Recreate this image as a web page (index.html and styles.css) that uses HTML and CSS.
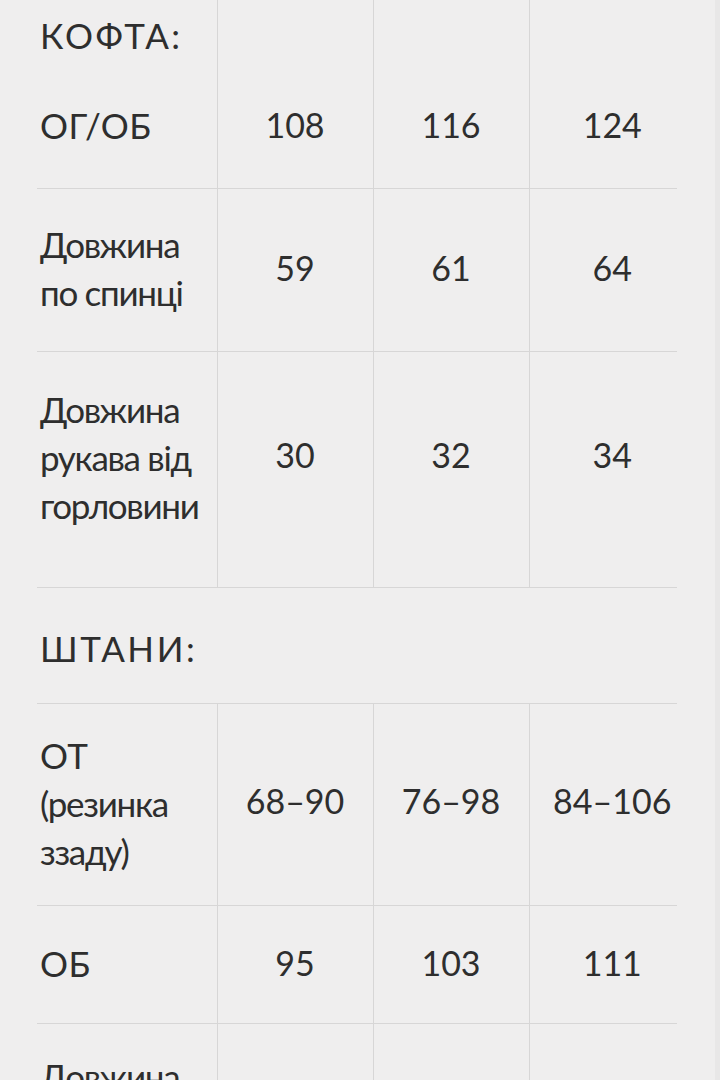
FILE: index.html
```html
<!DOCTYPE html>
<html lang="uk">
<head>
<meta charset="utf-8">
<link rel="stylesheet" href="styles.css">
</head>
<body>
<div class="page">
  <table class="sizes">
    <colgroup>
      <col class="c-label">
      <col class="c-val">
      <col class="c-val">
      <col class="c-last">
    </colgroup>
    <tr class="r-head">
      <td class="label caps wide">КОФТА:</td>
      <td class="val"></td>
      <td class="val"></td>
      <td class="val last"></td>
    </tr>
    <tr class="r1 line">
      <td class="label caps">ОГ/ОБ</td>
      <td class="val">108</td>
      <td class="val">116</td>
      <td class="val last">124</td>
    </tr>
    <tr class="r2 line">
      <td class="label">Довжина<br>по спинці</td>
      <td class="val">59</td>
      <td class="val">61</td>
      <td class="val last">64</td>
    </tr>
    <tr class="r3 line">
      <td class="label">Довжина<br>рукава від<br>горловини</td>
      <td class="val">30</td>
      <td class="val">32</td>
      <td class="val last">34</td>
    </tr>
    <tr class="r4 line">
      <td class="label caps wide" colspan="4">ШТАНИ:</td>
    </tr>
    <tr class="r5 line">
      <td class="label"><span class="caps">ОТ</span><br>(резинка<br>ззаду)</td>
      <td class="val">68–90</td>
      <td class="val">76–98</td>
      <td class="val last">84–106</td>
    </tr>
    <tr class="r6 line">
      <td class="label caps">ОБ</td>
      <td class="val">95</td>
      <td class="val">103</td>
      <td class="val last">111</td>
    </tr>
    <tr class="r7">
      <td class="label">Довжина</td>
      <td class="val"></td>
      <td class="val"></td>
      <td class="val last"></td>
    </tr>
  </table>
</div>
</body>
</html>
```

FILE: styles.css
```css
html, body {
  margin: 0;
  padding: 0;
  background: #efeeee;
}
body {
  height: 1080px;
  overflow: hidden;
}
.page {
  width: 720px;
  height: 1080px;
  box-sizing: border-box;
  padding-left: 37px;
  border-right: 5px solid #e8e7e7;
  overflow: hidden;
}
.sizes {
  width: 640px;
  border-collapse: collapse;
  table-layout: fixed;
  color: #2e2e2e;
}
.c-label { width: 180px; }
.c-val { width: 156px; }
.c-last { width: 148px; }
td {
  padding: 0;
  vertical-align: middle;
}
.label {
  font-family: "Lato", "Noto Sans", sans-serif;
  font-size: 35px;
  line-height: 48px;
  letter-spacing: -1.3px;
  padding-left: 3px;
  white-space: nowrap;
}
.caps {
  letter-spacing: 0.4px;
}
.caps.wide {
  letter-spacing: 2.6px;
}
.val {
  font-family: "Lato", sans-serif;
  font-size: 34px;
  line-height: 48px;
  text-align: center;
  border-left: 1px solid #d7d6d6;
}
.val.last {
  padding-left: 18px;
}
tr.line {
  border-bottom: 1px solid #d7d6d6;
}
.r-head td { height: 60px; padding-top: 11px; vertical-align: top; box-sizing: border-box; }
.r-head td.val { padding-top: 0; }
.r1 td { height: 128px; padding-top: 3px; box-sizing: border-box; }
.r2 td { height: 163px; padding-bottom: 3px; box-sizing: border-box; }
.r3 td { height: 236px; padding-bottom: 24px; box-sizing: border-box; }
.r3 td.val { padding-bottom: 28px; }
.r4 td { height: 116px; box-sizing: border-box; padding-top: 6px; }
.r5 td { height: 202px; box-sizing: border-box; padding-bottom: 3px; }
.r5 td.val { padding-bottom: 6px; }
.r6 td { height: 118px; box-sizing: border-box; padding-bottom: 3px; }
.r7 td { height: 200px; box-sizing: border-box; vertical-align: top; padding-top: 28px; }
```
